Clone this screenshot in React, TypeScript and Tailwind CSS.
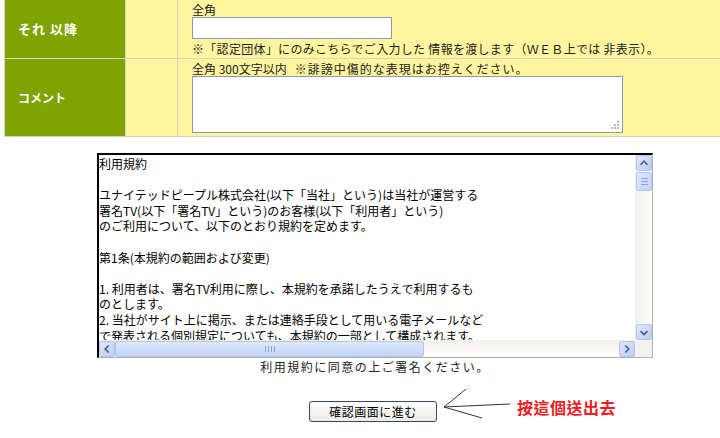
import React from "react";

const terms = [
  "利用規約",
  "",
  "ユナイテッドピープル株式会社(以下「当社」という)は当社が運営する",
  "署名TV(以下「署名TV」という)のお客様(以下「利用者」という)",
  "のご利用について、以下のとおり規約を定めます。",
  "",
  "第1条(本規約の範囲および変更)",
  "",
  "1. 利用者は、署名TV利用に際し、本規約を承諾したうえで利用するも",
  "のとします。",
  "2. 当社がサイト上に掲示、または連絡手段として用いる電子メールなど",
  "で発表される個別規定についても、本規約の一部として構成されます。",
];

const ScrollButton = ({ dir }: { dir: "up" | "down" | "left" | "right" }) => {
  const paths: Record<string, string> = {
    up: "M4 10 L8 6 L12 10",
    down: "M4 7 L8 11 L12 7",
    left: "M10 4 L6 8 L10 12",
    right: "M6 4 L10 8 L6 12",
  };
  return (
    <div className="w-[16px] h-[16px] shrink-0 rounded-[2px] border border-[#b4c6f0] bg-gradient-to-br from-[#dfe8fd] to-[#b9cdf8] flex items-center justify-center">
      <svg width="16" height="16" viewBox="0 0 16 16">
        <path d={paths[dir]} fill="none" stroke="#4d6185" strokeWidth="2" />
      </svg>
    </div>
  );
};

export default function App() {
  return (
    <div className="w-[720px] h-[438px] bg-white overflow-hidden font-['Noto_Sans_CJK_JP',sans-serif] text-[12px] text-[#222]">
      {/* form table */}
      <div className="ml-[4px] w-[760px] border-l border-[#d6d6bc]">
        <div className="flex h-[59px] border-b border-[#d6d6bc]">
          <div className="w-[121px] bg-[#7fa300] border-r border-[#d6d6bc] flex items-center pl-[13px] text-white font-bold text-[13px] tracking-[1px]">
            それ 以降
          </div>
          <div className="w-[52px] bg-[#fff59f] border-r border-[#d6d6bc]" />
          <div className="flex-1 bg-[#fff59f] pl-[14px] pt-[2px] leading-[15px]">
            <div>全角</div>
            <input
              type="text"
              className="block w-[200px] h-[22px] bg-white border border-[#8a9bb0] outline-none"
            />
            <div className="mt-[2px] tracking-[0.3px]">
              ※「認定団体」にのみこちらでご入力した 情報を渡します（ＷＥＢ上では 非表示）。
            </div>
          </div>
        </div>
        <div className="flex h-[78px] border-b border-[#d6d6bc]">
          <div className="w-[121px] bg-[#7fa300] border-r border-[#d6d6bc] flex items-center pl-[13px] text-white font-bold text-[12px]">
            コメント
          </div>
          <div className="w-[52px] bg-[#fff59f] border-r border-[#d6d6bc]" />
          <div className="flex-1 bg-[#fff59f] pl-[14px] pt-[2px] leading-[15px]">
            <div>
              全角 300文字以内&nbsp;&nbsp;&nbsp;
              <span className="tracking-[1px]">※誹謗中傷的な表現はお控えください。</span>
            </div>
            <div className="relative w-[431px] h-[57px]">
              <textarea className="block w-full h-full resize-none bg-white border border-[#8a9bb0] outline-none" />
              <svg className="absolute right-[3px] bottom-[3px]" width="10" height="10" viewBox="0 0 10 10">
                <rect x="7" y="1" width="2" height="2" fill="#b8b8b8" />
                <rect x="4" y="4" width="2" height="2" fill="#b8b8b8" />
                <rect x="7" y="4" width="2" height="2" fill="#b8b8b8" />
                <rect x="1" y="7" width="2" height="2" fill="#b8b8b8" />
                <rect x="4" y="7" width="2" height="2" fill="#b8b8b8" />
                <rect x="7" y="7" width="2" height="2" fill="#b8b8b8" />
              </svg>
            </div>
          </div>
        </div>
      </div>

      {/* terms box */}
      <div className="ml-[97px] mt-[16px] w-[556px]">
        <div className="h-[205px] flex flex-col border-t-2 border-l-2 border-black border-r border-b border-r-[#b0b0b0] border-b-[#b0b0b0]">
          <div className="flex flex-1 min-h-0">
            <div className="flex-1 overflow-hidden bg-white text-black leading-[15.6px] whitespace-pre pt-[1px]">
              {terms.map((t, i) => (
                <div key={i} className="h-[15.6px]">{t}</div>
              ))}
            </div>
            <div className="w-[17px] bg-gradient-to-r from-[#f3f1ec] to-[#fdfdfa] border-l border-[#eeeeea] flex flex-col items-center">
              <ScrollButton dir="up" />
              <div className="mt-[1px] w-[16px] h-[19px] rounded-[2px] border border-[#b4c6f0] bg-gradient-to-br from-[#dfe8fd] to-[#c3d4f9] flex flex-col items-center justify-center gap-[2px]">
                <div className="w-[7px] h-px bg-[#8da3d6]" />
                <div className="w-[7px] h-px bg-[#8da3d6]" />
                <div className="w-[7px] h-px bg-[#8da3d6]" />
              </div>
              <div className="flex-1" />
              <ScrollButton dir="down" />
            </div>
          </div>
          <div className="h-[17px] flex">
            <div className="flex-1 flex items-center bg-gradient-to-b from-[#f3f1ec] to-[#fdfdfa]">
              <ScrollButton dir="left" />
              <div className="w-[309px] h-[16px] rounded-[2px] border border-[#b4c6f0] bg-gradient-to-b from-[#dfe8fd] to-[#c3d4f9] flex items-center justify-center gap-[2px]">
                <div className="w-px h-[6px] bg-[#8da3d6]" />
                <div className="w-px h-[6px] bg-[#8da3d6]" />
                <div className="w-px h-[6px] bg-[#8da3d6]" />
                <div className="w-px h-[6px] bg-[#8da3d6]" />
              </div>
              <div className="flex-1" />
              <ScrollButton dir="right" />
            </div>
            <div className="w-[17px] bg-[#f3f1ec]" />
          </div>
        </div>
        <div className="mt-[1px] text-center leading-[15px] tracking-[1.5px]">
          利用規約に同意の上ご署名ください。
        </div>
      </div>

      {/* submit row */}
      <div className="mt-[27px] ml-[309px] flex items-start">
        <button
          type="button"
          className="w-[128px] h-[21px] rounded-[3px] border border-[#2e4a6b] bg-gradient-to-b from-white to-[#ecebe6] text-[12px] text-black leading-none tracking-[0.5px]"
        >
          確認画面に進む
        </button>
        <svg width="80" height="34" viewBox="0 0 80 34" className="shrink-0 -mt-[12px]">
          <line x1="7" y1="18" x2="29" y2="0" stroke="#333" strokeWidth="1" />
          <line x1="7" y1="18" x2="73" y2="15" stroke="#333" strokeWidth="1" />
          <line x1="7" y1="18" x2="45" y2="29" stroke="#333" strokeWidth="1" />
        </svg>
        <span className="font-['Noto_Sans_CJK_TC',sans-serif] font-bold text-[16px] text-[#ee1c25] leading-none tracking-[0.5px] -mt-[2px]">
          按這個送出去
        </span>
      </div>
    </div>
  );
}
